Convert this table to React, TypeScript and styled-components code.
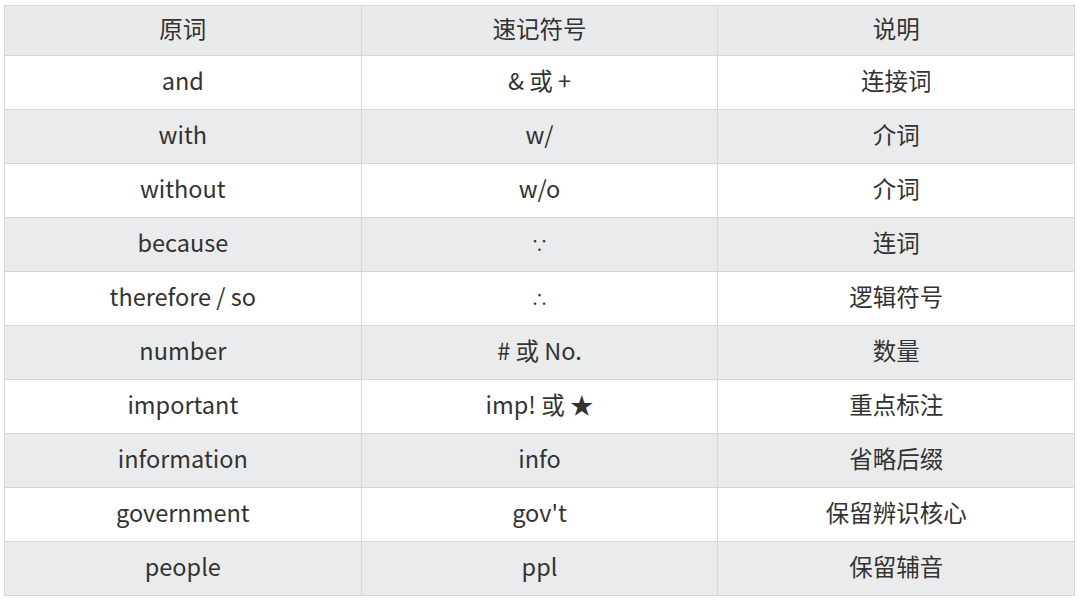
import React from "react";
import styled, { createGlobalStyle } from "styled-components";

const Global = createGlobalStyle`
  html, body { margin: 0; padding: 0; background: #ffffff; }
  body { font-family: "Noto Sans CJK SC", "Noto Sans", sans-serif; }
`;

const Page = styled.div`
  width: 1080px;
  height: 600px;
  box-sizing: border-box;
  padding: 5px 5px 5px 4px;
  background: #fff;
`;

const Table = styled.table`
  width: 1071px;
  border-collapse: collapse;
  table-layout: fixed;
  color: #333333;
  font-size: 23.5px;
  line-height: 1.2;
`;

const HeadCell = styled.th`
  height: 50px;
  padding: 0 0 4px;
  box-sizing: border-box;
  font-weight: 400;
  background: #e9eaec;
  border: 1px solid #d6d7d9;
  text-align: center;
`;

const Row = styled.tr<{ $alt: boolean }>`
  background: ${(p) => (p.$alt ? "#eaebed" : "#ffffff")};
`;

const Cell = styled.td`
  height: 54px;
  padding: 0 0 4px;
  box-sizing: border-box;
  border: 1px solid #d6d7d9;
  text-align: center;
`;

const Mark = styled.span`
  font-size: 17px;
`;

const rows: [string, React.ReactNode, string][] = [
  ["and", "& 或 +", "连接词"],
  ["with", "w/", "介词"],
  ["without", "w/o", "介词"],
  ["because", <Mark>∵</Mark>, "连词"],
  ["therefore / so", <Mark>∴</Mark>, "逻辑符号"],
  ["number", "# 或 No.", "数量"],
  ["important", "imp! 或 ★", "重点标注"],
  ["information", "info", "省略后缀"],
  ["government", "gov't", "保留辨识核心"],
  ["people", "ppl", "保留辅音"],
];

export default function App() {
  return (
    <Page>
      <Global />
      <Table>
        <thead>
          <tr>
            <HeadCell>原词</HeadCell>
            <HeadCell>速记符号</HeadCell>
            <HeadCell>说明</HeadCell>
          </tr>
        </thead>
        <tbody>
          {rows.map((r, i) => (
            <Row key={i} $alt={i % 2 === 1}>
              <Cell>{r[0]}</Cell>
              <Cell>{r[1]}</Cell>
              <Cell>{r[2]}</Cell>
            </Row>
          ))}
        </tbody>
      </Table>
    </Page>
  );
}
